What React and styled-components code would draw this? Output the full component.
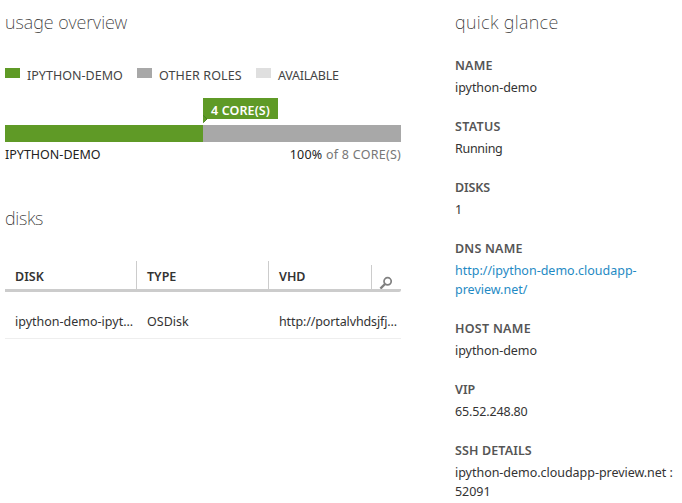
import React from 'react';
import styled, { createGlobalStyle } from 'styled-components';

const GlobalStyle = createGlobalStyle`
  * { box-sizing: border-box; }
  body {
    margin: 0;
    background: #fff;
    color: #333;
    font: 12.5px/19px "Noto Sans", sans-serif;
  }
`;

const Page = styled.main`
  display: grid;
  grid-template-columns: 396px 222px;
  column-gap: 54px;
  width: 682px;
  height: 503px;
  padding-left: 5px;
  overflow: hidden;
`;

const Heading = styled.h2`
  margin: 0;
  padding-top: 9px;
  height: ${(p) => p.$height}px;
  font-size: 18px;
  line-height: 26px;
  font-weight: 200;
  letter-spacing: ${(p) => p.$spacing || 0}px;
  color: #333;
  white-space: nowrap;
`;

const Legend = styled.ul`
  display: flex;
  height: 32px;
  margin: 0;
  padding: 0;
  list-style: none;
`;

const LegendItem = styled.li`
  display: flex;
  width: ${(p) => p.$width}px;
  gap: 7px;
  color: #444;
  letter-spacing: ${(p) => p.$spacing}px;
  white-space: nowrap;
`;

const Swatch = styled.span`
  width: 15px;
  height: 10px;
  margin-top: 2px;
  background: ${(p) => p.$color};
`;

const CalloutRow = styled.div`
  height: 27px;
  padding-left: 198px;
`;

const Callout = styled.div`
  position: relative;
  width: 75px;
  height: 21px;
  padding-left: 8px;
  line-height: 25px;
  font-weight: 600;
  letter-spacing: 0.12px;
  color: #fff;
  background: #5f9a26;
  white-space: nowrap;
`;

const CalloutTail = styled.svg`
  position: absolute;
  left: 0;
  top: 17px;
  display: block;
`;

const Bar = styled.div`
  display: flex;
  height: 17px;
  background: #a8a8a8;
`;

const BarUsed = styled.div`
  width: 198px;
  background: #5f9a26;
`;

const BarCaption = styled.div`
  display: flex;
  justify-content: space-between;
  height: 54px;
  padding-top: 3px;
  color: #222;
`;

const Total = styled.span`
  letter-spacing: 0.25px;
`;

const Muted = styled.span`
  color: #777;
`;

const TableHead = styled.div`
  display: flex;
  align-items: flex-end;
  height: 31px;
  border-bottom: 3px solid #ccc;
  border-bottom-right-radius: 2px;
`;

const HeadCell = styled.div`
  width: 132px;
  height: 28px;
  padding: 6px 0 0 10px;
  border-right: 1px solid #ccc;
  font-weight: 600;
  color: #333;
`;

const LastHeadCell = styled(HeadCell)`
  width: 103px;
  height: 24px;
  padding-top: 2px;
`;

const SearchCell = styled.div`
  flex: 1;
  height: 14px;
  padding-left: 7px;
`;

const SearchIcon = styled.svg`
  display: block;
`;

const TableRow = styled.div`
  display: grid;
  grid-template-columns: 132px 132px 132px;
  height: 47px;
  padding-top: 20px;
  border-bottom: 1px solid #eee;
`;

const Cell = styled.div`
  padding-left: 10px;
  white-space: nowrap;
  letter-spacing: ${(p) => p.$spacing || 0}px;
`;

const Details = styled.dl`
  margin: 0;
`;

const Label = styled.dt`
  margin-bottom: 3px;
  font-weight: 600;
  color: #555;
  letter-spacing: ${(p) => p.$spacing || 0}px;
`;

const Value = styled.dd`
  margin: 0 0 20px;
  white-space: nowrap;
  color: ${(p) => (p.$link ? '#1f8ac4' : '#333')};
  letter-spacing: ${(p) => p.$spacing || 0}px;
`;

const legend = [
  { name: 'IPYTHON-DEMO', color: '#5f9a26', width: 132, spacing: 0.03 },
  { name: 'OTHER ROLES', color: '#a8a8a8', width: 119, spacing: 0.12 },
  { name: 'AVAILABLE', color: '#dfdfdf', width: 100, spacing: -0.25 },
];

const details = [
  { label: 'NAME', lines: ['ipython-demo'], spacing: 0.2, valueSpacing: -0.05 },
  { label: 'STATUS', lines: ['Running'], spacing: 0.3, valueSpacing: -0.3 },
  { label: 'DISKS', lines: ['1'], spacing: -0.1 },
  { label: 'DNS NAME', lines: ['http://ipython-demo.cloudapp-', 'preview.net/'], link: true, spacing: 0.2 },
  { label: 'HOST NAME', lines: ['ipython-demo'], spacing: 0.28, valueSpacing: -0.05 },
  { label: 'VIP', lines: ['65.52.248.80'], valueSpacing: -0.15 },
  { label: 'SSH DETAILS', lines: ['ipython-demo.cloudapp-preview.net :', '52091'], spacing: 0.12, valueSpacing: -0.03 },
];

export default function App() {
  return (
    <>
      <GlobalStyle />
      <Page>
        <section>
          <Heading $height={66}>usage overview</Heading>
          <Legend>
            {legend.map((item) => (
              <LegendItem key={item.name} $width={item.width} $spacing={item.spacing}>
                <Swatch $color={item.color} />
                {item.name}
              </LegendItem>
            ))}
          </Legend>
          <CalloutRow>
            <Callout>
              4 CORE(S)
              <CalloutTail width="5" height="8" viewBox="0 0 5 8">
                <path d="M0 0L4.2 4L0 8Z" fill="#5f9a26" />
                <path d="M0 0.3L4 4L0.3 7.7" fill="none" stroke="#3f7a1c" strokeWidth="0.8" />
              </CalloutTail>
            </Callout>
          </CalloutRow>
          <Bar>
            <BarUsed />
          </Bar>
          <BarCaption>
            <span>IPYTHON-DEMO</span>
            <Total>100% <Muted>of 8 CORE(S)</Muted></Total>
          </BarCaption>
          <Heading $height={65} $spacing={-0.3}>disks</Heading>
          <TableHead>
            <HeadCell>DISK</HeadCell>
            <HeadCell>TYPE</HeadCell>
            <LastHeadCell>VHD</LastHeadCell>
            <SearchCell>
              <SearchIcon width="13" height="14" viewBox="0 0 13 14" fill="none" stroke="#808080">
                <circle cx="8.6" cy="6.3" r="3.6" strokeWidth="1.7" />
                <path d="M6 9L1.4 13.6" strokeWidth="2.4" />
              </SearchIcon>
            </SearchCell>
          </TableHead>
          <TableRow>
            <Cell>ipython-demo-ipyt...</Cell>
            <Cell>OSDisk</Cell>
            <Cell $spacing={-0.12}>http://portalvhdsjfj...</Cell>
          </TableRow>
        </section>
        <aside>
          <Heading $height={56} $spacing={0.35}>quick glance</Heading>
          <Details>
            {details.map((item) => (
              <React.Fragment key={item.label}>
                <Label $spacing={item.spacing}>{item.label}</Label>
                <Value $link={item.link} $spacing={item.valueSpacing}>
                  {item.lines.map((line) => (
                    <div key={line}>{line}</div>
                  ))}
                </Value>
              </React.Fragment>
            ))}
          </Details>
        </aside>
      </Page>
    </>
  );
}
